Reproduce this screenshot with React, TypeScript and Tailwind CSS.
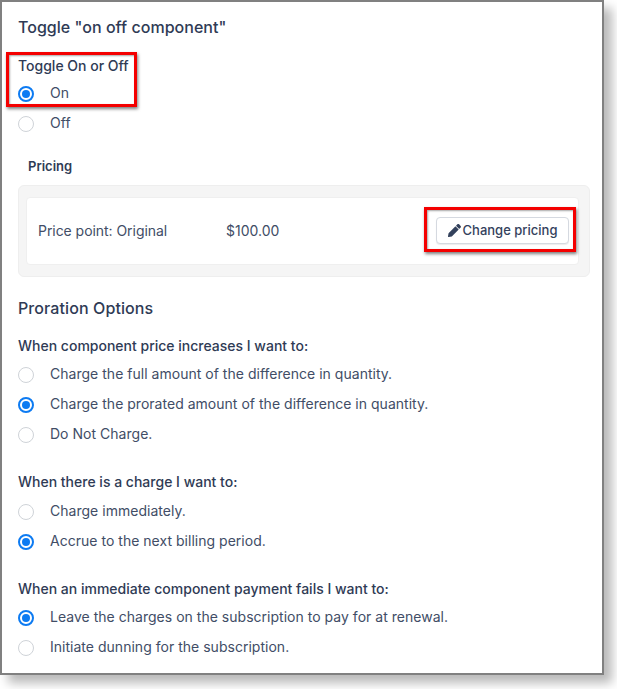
import React from "react";

function Radio({ on, label }: { on?: boolean; label: string }) {
  return (
    <div className="flex h-[30px] items-center">
      {on ? (
        <span className="flex h-4 w-4 items-center justify-center rounded-full border-2 border-[#0d7bf2] bg-white">
          <span className="h-[8px] w-[8px] rounded-full bg-[#0d7bf2]" />
        </span>
      ) : (
        <span className="h-4 w-4 rounded-full border border-[#cfd3d8] bg-white" />
      )}
      <span className="mb-[2px] ml-4 text-[14px] leading-5 tracking-[0.02px] text-[#414d66]">{label}</span>
    </div>
  );
}

function Question({ children }: { children: React.ReactNode }) {
  return <div className="h-5 text-[14px] font-[450] leading-5 text-[#2f3b55]">{children}</div>;
}

function Pencil() {
  return (
    <svg viewBox="0 0 512 512" className="mr-[2px] h-[13px] w-[13px] fill-[#33415c]">
      <path d="M497.9 142.1l-46.1 46.1c-4.7 4.7-12.3 4.7-17 0l-111-111c-4.7-4.7-4.7-12.3 0-17l46.1-46.1c18.7-18.7 49.1-18.7 67.9 0l60.1 60.1c18.8 18.7 18.8 49.1 0 67.9zM284.2 99.8L21.6 362.4.4 483.9c-2.9 16.4 11.4 30.6 27.8 27.8l121.5-21.3 262.6-262.6c4.7-4.7 4.7-12.3 0-17l-111-111c-4.8-4.7-12.4-4.7-17.1 0z" />
    </svg>
  );
}

export default function App() {
  return (
    <div className="h-[689px] w-[617px] bg-white font-['Inter',sans-serif]">
      <div className="relative h-[675px] w-[604px] border-2 border-[#808080] bg-white px-4 pt-[13px] shadow-[8px_8px_10px_rgba(0,0,0,0.28)]">
        <div className="h-6 text-[16px] font-[450] leading-6 tracking-[0.03px] text-[#2f3b55]">
          Toggle "on off component"
        </div>
        <div className="mt-[17px]">
          <Question>Toggle On or Off</Question>
        </div>
        <div className="mt-[3px]">
          <Radio on label="On" />
          <Radio label="Off" />
        </div>

        <div className="mt-[17px] pl-[10px] text-[13px] font-semibold leading-5 text-[#2f3b55]">Pricing</div>
        <div className="mt-[9px] w-[572px] rounded-md border border-[#eeeeee] bg-[#f5f5f5] px-[7px] py-[11px]">
          <div className="flex h-[68px] w-[553px] items-center rounded border border-[#efefef] bg-white pl-[11px] pr-[9px]">
            <span className="mb-px w-[188px] text-[14px] tracking-[-0.05px] text-[#414d66]">Price point: Original</span>
            <span className="mb-px text-[14px] text-[#414d66]">$100.00</span>
            <button className="mb-px ml-auto flex h-[27px] w-[133px] items-center justify-center rounded border border-[#d5d9e0] bg-white text-[13px] font-[450] text-[#33415c] shadow-[0_1px_1px_rgba(0,0,0,0.08)]">
              <Pencil />
              Change pricing
            </button>
          </div>
        </div>

        <div className="mt-[19px] h-6 text-[16px] font-[450] leading-6 tracking-[0.1px] text-[#2f3b55]">Proration Options</div>
        <div className="mt-[16px]">
          <Question>When component price increases I want to:</Question>
        </div>
        <div className="mt-[4px]">
          <Radio label="Charge the full amount of the difference in quantity." />
          <Radio on label="Charge the prorated amount of the difference in quantity." />
          <Radio label="Do Not Charge." />
        </div>

        <div className="mt-[22px]">
          <Question>When there is a charge I want to:</Question>
        </div>
        <div className="mt-[5px]">
          <Radio label="Charge immediately." />
          <Radio on label="Accrue to the next billing period." />
        </div>

        <div className="mt-[22px]">
          <Question>When an immediate component payment fails I want to:</Question>
        </div>
        <div className="mt-[4px]">
          <Radio on label="Leave the charges on the subscription to pay for at renewal." />
          <Radio label="Initiate dunning for the subscription." />
        </div>

        <div className="pointer-events-none absolute left-[4px] top-[50px] h-[55px] w-[131px] border-[3px] border-[#f40000] shadow-[1px_2px_3px_rgba(0,0,0,0.5),inset_1px_1px_2px_rgba(0,0,0,0.35)]" />
        <div className="pointer-events-none absolute left-[422px] top-[205px] h-[45px] w-[152px] border-[3px] border-[#f40000] shadow-[1px_2px_3px_rgba(0,0,0,0.5),inset_1px_1px_2px_rgba(0,0,0,0.35)]" />
      </div>
    </div>
  );
}
